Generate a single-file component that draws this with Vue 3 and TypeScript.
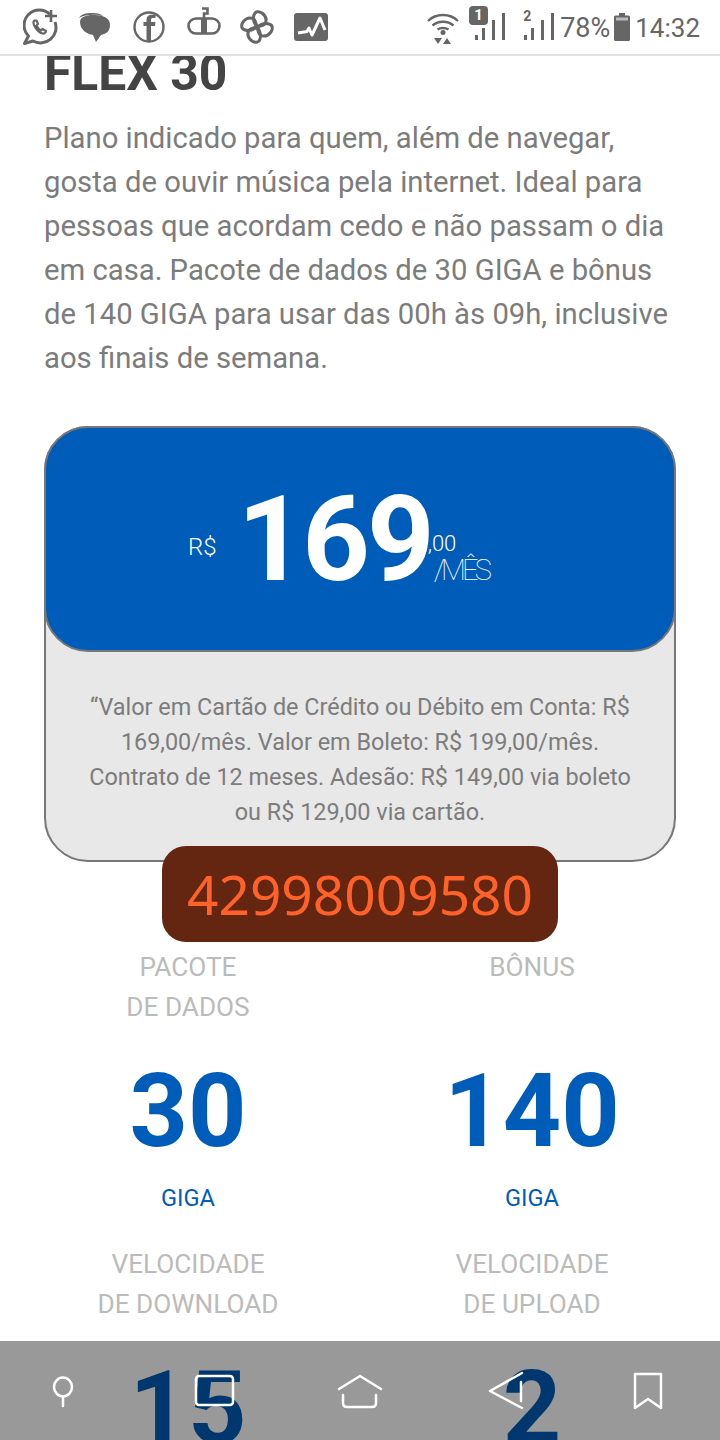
<script setup lang="ts">
interface Spec {
  label: string[];
  value: string;
  unit?: string;
}

const specs: Spec[] = [
  { label: ["PACOTE", "DE DADOS"], value: "30", unit: "GIGA" },
  { label: ["BÔNUS"], value: "140", unit: "GIGA" },
  { label: ["VELOCIDADE", "DE DOWNLOAD"], value: "15" },
  { label: ["VELOCIDADE", "DE UPLOAD"], value: "2" },
];

const bars = [
  { h: 5, x: 0 },
  { h: 12, x: 7 },
  { h: 20, x: 17 },
  { h: 27, x: 27 },
];
const petals = [0, 90, 180, 270];
</script>

<template>
  <div class="phone">
    <header class="status">
      <div class="status-left">
        <svg width="36" height="38" viewBox="0 0 36 38" fill="none" stroke="#666" stroke-width="3">
          <path d="M27 6.500A15 15 0 0 0 5.500 28L1.500 35.500L10 33A15.500 15.500 0 0 0 32 14" stroke-linejoin="round" />
          <path d="M11.500 12.500c-1.500 1-1.500 3 .5 6.500s5 6 7.500 6.500c2 .3 3.500-1 3.500-2.500l-3.500-2-1.500 1.500c-2-1-3.500-3-4.500-5l1.500-1.500-1.500-3.500z" stroke-width="2.200" stroke-linejoin="round" />
          <path d="M28 2v12M22 8h12" stroke-width="2.600" />
        </svg>
        <svg width="32" height="32" viewBox="0 0 32 32">
          <path d="M0 7C2 3 7 2 13 2c6 0 9 1 11 3C18 3 6 3 0 7z" fill="#666" />
          <path d="M1 11C1 6 7 4 14 4s17 1 17 10-7 9-9 10l-5 7-3-7C8 23 1 19 1 11z" fill="#666" />
        </svg>
        <svg class="ic-fb" width="32" height="32" viewBox="0 0 32 32" fill="none" stroke="#666">
          <circle cx="16" cy="16" r="14.500" stroke-width="2.400" />
          <path d="M18 30V15h4l.5-4H18V9c0-1.500.7-2 2-2h2.500V3.800h-3.500c-3.500 0-5.500 2-5.500 5V11h-3v4h3v15z" fill="#666" stroke="none" />
        </svg>
        <svg class="ic-vm" width="34" height="28" viewBox="0 0 34 28" fill="none" stroke="#666" stroke-width="2.600">
          <rect x="1.500" y="11.500" width="31" height="15" rx="7.500" />
          <rect x="14" y="11.500" width="6" height="15" fill="#666" stroke="none" />
          <path d="M17 12V6.500h3.500V1.500H15" />
        </svg>
        <svg class="ic-pin" width="36" height="36" viewBox="-18 -18 36 36" fill="none" stroke="#666" stroke-width="3" stroke-linejoin="round">
          <path
            v-for="r in petals"
            :key="r"
            d="M0 0C-3 -4 -4 -9 -3 -12C-2 -16 2 -16 5 -14C9 -11 10 -7 8 -3C6 -1 3 -1 0 0z"
            :transform="`rotate(${r})`"
          />
        </svg>
        <svg class="ic-act" width="34" height="28" viewBox="0 0 34 28">
          <rect width="34" height="28" rx="3" fill="#666" />
          <path d="M4 20L13 18.500L15 15L18 22L26 5L31 17" fill="none" stroke="#fff" stroke-width="3" stroke-linejoin="round" />
        </svg>
      </div>
      <div class="status-right">
        <svg class="wifi" width="32" height="32" viewBox="0 0 32 32" fill="none" stroke="#666" stroke-width="2.400">
          <path d="M1 8C9 0 23 0 31 8M5.500 12.500c6-5 15-5 21 0M10.500 16.500c3-2 8-2 11 0" />
          <circle cx="16" cy="19.500" r="2.500" fill="#666" stroke="none" />
          <path d="M7 25h8l-4 6zM16 31h8l-4-6z" fill="#666" stroke="none" />
        </svg>
        <div class="sim">
          <span class="sim-badge">1</span>
          <svg class="bars" width="30" height="27" viewBox="0 0 30 27" fill="#666">
            <rect v-for="b in bars" :key="b.x" :x="b.x" :y="27 - b.h" width="3" :height="b.h" />
          </svg>
        </div>
        <div class="sim sim-two">
          <span class="sim-num">2</span>
          <svg class="bars" width="30" height="27" viewBox="0 0 30 27" fill="#666">
            <rect v-for="b in bars" :key="b.x" :x="b.x" :y="27 - b.h" width="3" :height="b.h" />
          </svg>
        </div>
        <span class="status-text">78%</span>
        <svg class="battery" width="16" height="28" viewBox="0 0 16 28">
          <rect x="5" width="6" height="3" fill="#666" />
          <rect y="2.500" width="16" height="25.500" rx="1.500" fill="#666" />
          <rect x="2" y="4.500" width="12" height="3" fill="#bbb" />
        </svg>
        <span class="status-text time">14:32</span>
      </div>
    </header>

    <main class="page">
      <section class="intro">
        <h1>FLEX 30</h1>
        <p>
          Plano indicado para quem, além de navegar, gosta de ouvir música pela internet. Ideal para
          pessoas que acordam cedo e não passam o dia em casa. Pacote de dados de 30 GIGA e bônus de
          140 GIGA para usar das 00h às 09h, inclusive aos finais de semana.
        </p>
      </section>

      <section class="card">
        <div class="price">
          <span class="currency">R$</span>
          <span class="amount">169</span>
          <div class="cents">
            <span>,00</span>
            <span class="per">/MÊS</span>
          </div>
        </div>
        <p class="terms">
          “Valor em Cartão de Crédito ou Débito em Conta: R$ 169,00/mês. Valor em Boleto: R$ 199,00/mês.
          Contrato de 12 meses. Adesão: R$ 149,00 via boleto ou R$ 129,00 via cartão.
        </p>
      </section>

      <div class="phone-number">42998009580</div>

      <section class="specs">
        <div v-for="spec in specs" :key="spec.label.join() + spec.value" class="spec">
          <div class="spec-label">
            <div v-for="line in spec.label" :key="line">{{ line }}</div>
          </div>
          <div class="spec-value">{{ spec.value }}</div>
          <div v-if="spec.unit" class="spec-unit">{{ spec.unit }}</div>
        </div>
      </section>
    </main>

    <nav class="nav">
      <svg width="720" height="99" viewBox="0 0 720 99" fill="none" stroke="#fff" stroke-width="2.500" stroke-linecap="round" stroke-linejoin="round">
        <ellipse cx="63" cy="46" rx="9" ry="9.500" />
        <path d="M63 56v9" />
        <rect x="196" y="35" width="37" height="29" rx="3" />
        <path d="M339 48l21-13 21 13M343 54v8q0 4 4 4h25q4 0 4-4v-8" />
        <path d="M522 32l-32 18 32 17M521 41v19" />
        <path d="M635 33h26v34l-13-9-13 9z" />
      </svg>
    </nav>
  </div>
</template>

<style scoped>
.phone {
  position: relative;
  width: 720px;
  height: 1440px;
  overflow: hidden;
  background: #fff;
  font-family: Roboto, "Liberation Sans", sans-serif;
}

.status {
  height: 54px;
  border-bottom: 2px solid #e2e2e2;
  display: flex;
  justify-content: space-between;
  color: #666;
}

.status-left {
  display: flex;
  align-items: center;
  gap: 20px;
  padding-left: 23px;
}

.status-left svg {
  flex: none;
}

.ic-fb {
  margin-left: 2px;
}

.ic-vm {
  margin: 0 0 12px 2px;
}

.ic-pin {
  margin-left: -2px;
}

.ic-act {
  margin-left: -1px;
}

.status-right {
  display: flex;
  align-items: center;
  padding-right: 20px;
}

.wifi {
  margin-top: 4px;
  margin-right: 10px;
}

.sim {
  position: relative;
  flex: none;
  align-self: flex-start;
  width: 36px;
  height: 34px;
  margin-top: 6px;
  margin-right: 17px;
}

.sim-two {
  width: 32px;
  margin-right: 6px;
}

.sim-badge {
  position: absolute;
  left: 0;
  top: 0;
  width: 19px;
  height: 19px;
  border-radius: 4px;
  background: #666;
  color: #fff;
  font-size: 15px;
  font-weight: 700;
  line-height: 19px;
  text-align: center;
}

.sim-num {
  position: absolute;
  left: 1px;
  top: 3px;
  font-size: 14px;
  font-weight: 700;
  line-height: 14px;
}

.bars {
  position: absolute;
  right: 0;
  bottom: 0;
}

.status-text {
  font-size: 27px;
  line-height: 32px;
  margin-top: 1px;
}

.battery {
  margin: 0 5px 0 4px;
}

.time {
  font-size: 26px;
}

.page {
  height: 1384px;
  overflow: hidden;
}

.intro {
  padding: 0 44px;
}

h1 {
  margin: 0;
  font-size: 49.8px;
  font-weight: 700;
  line-height: 34px;
  color: #444;
}

.intro p {
  margin: 26px 0 0;
  font-size: 29.25px;
  line-height: 44px;
  color: #7c7c7c;
}

.card {
  margin: 46px 44px 0;
  height: 436px;
  box-sizing: border-box;
  border: 2px solid #777;
  border-radius: 44px;
  background: #e8e8e8;
}

.price {
  height: 226px;
  margin: -2px -2px 0;
  box-sizing: border-box;
  border: 2px solid #777;
  border-radius: 44px;
  background: #005cb9;
  color: #fff;
  display: flex;
  align-items: center;
  padding-left: 142px;
}

.currency {
  font-size: 24px;
  font-weight: 300;
  margin-right: 21px;
  margin-top: 16px;
}

.amount {
  font-size: 118px;
  font-weight: 700;
  line-height: 118px;
  letter-spacing: -3px;
  margin-top: 2px;
}

.cents {
  display: flex;
  flex-direction: column;
  font-size: 22px;
  font-weight: 300;
  line-height: 24px;
  margin-top: 38px;
  margin-left: -4px;
}

.per {
  font-size: 29px;
  font-weight: 100;
  line-height: 28px;
  margin-left: 6px;
  letter-spacing: -3.8px;
}

.terms {
  margin: 38px 30px 0;
  font-size: 23.4px;
  line-height: 35px;
  color: #7c7c7c;
  text-align: center;
}

.phone-number {
  position: relative;
  width: 396px;
  height: 96px;
  margin: -16px auto 0;
  border-radius: 24px;
  background: #652611;
  color: #ff6229;
  font-family: "Noto Sans", sans-serif;
  font-size: 55px;
  line-height: 96px;
  text-align: center;
}

.specs {
  display: grid;
  grid-template-columns: 344px 344px;
  padding: 0 16px;
}

.spec {
  text-align: center;
  height: 297px;
}

.spec-label {
  height: 80px;
  padding-top: 5px;
  font-size: 26.2px;
  line-height: 40px;
  color: #bbb;
}

.spec-value {
  margin-top: 34px;
  font-size: 102px;
  font-weight: 700;
  line-height: 100px;
  color: #005cb9;
}

.spec-unit {
  margin-top: 20px;
  font-size: 23.6px;
  line-height: 34px;
  color: #005cb9;
}

.nav {
  position: absolute;
  left: 0;
  right: 0;
  bottom: 0;
  height: 99px;
  background: rgba(0, 0, 0, 0.4);
}

.nav svg {
  display: block;
}
</style>
